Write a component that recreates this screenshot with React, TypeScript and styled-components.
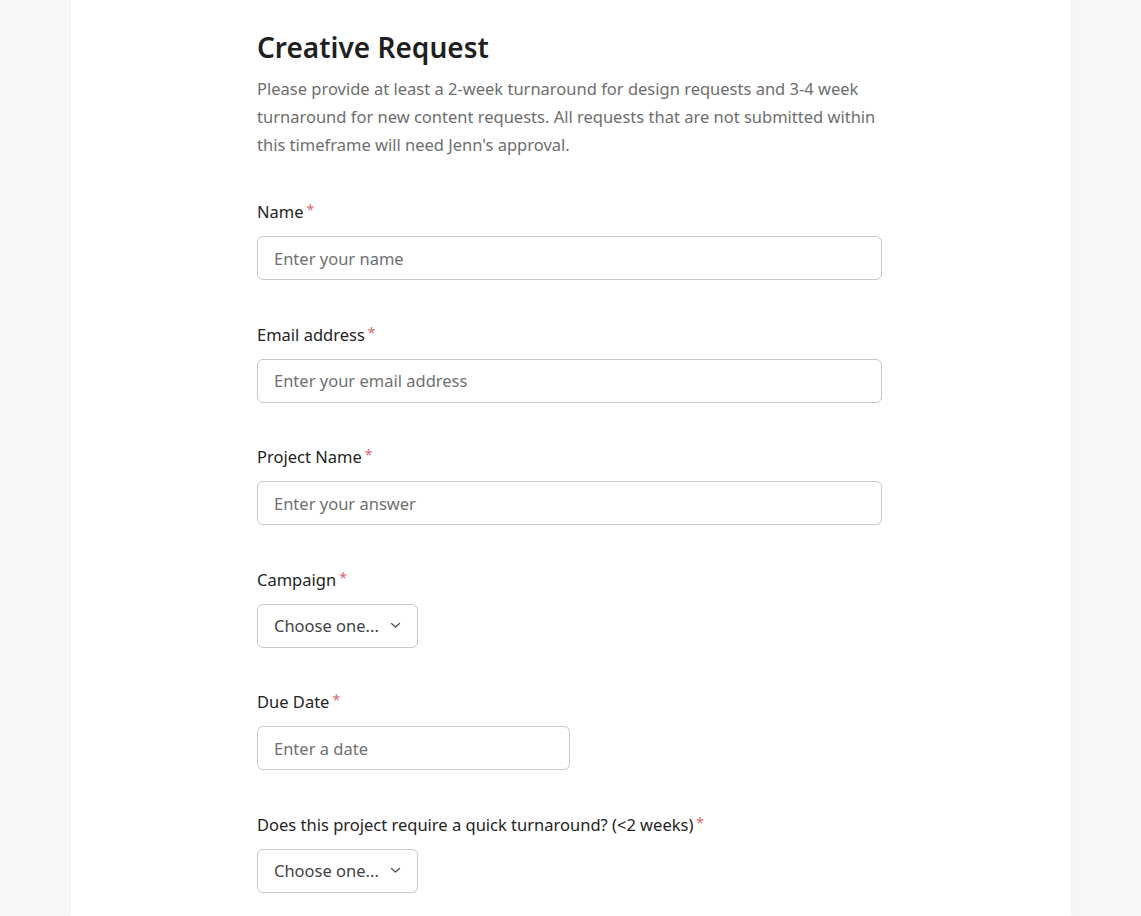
import React from "react";
import styled, { createGlobalStyle } from "styled-components";

const Global = createGlobalStyle`
  html, body { margin: 0; padding: 0; background: #f7f7f7; }
  body { font-family: "Noto Sans", "Open Sans", sans-serif; }
  * { box-sizing: border-box; }
`;

const Page = styled.div`
  min-height: 916px;
  background: #f7f7f7;
  display: flex;
  justify-content: center;
`;

const Card = styled.main`
  width: 1000px;
  min-height: 916px;
  background: #ffffff;
  box-shadow: 0 0 2px rgba(0, 0, 0, 0.06);
  display: flex;
  justify-content: flex-start;
  padding-left: 186.5px;
`;

const Form = styled.form`
  width: 625px;
  padding-top: 28px;
  display: flex;
  flex-direction: column;
`;

const Title = styled.h1`
  margin: 0;
  font-size: 28px;
  line-height: 38px;
  font-weight: 600;
  color: #1f1f1f;
`;

const Description = styled.p`
  margin: 9px 0 0;
  font-size: 16.5px;
  line-height: 28px;
  color: #6e6e6e;
`;

const Fields = styled.div`
  margin-top: 39px;
  display: flex;
  flex-direction: column;
  gap: 40.5px;
`;

const Field = styled.div`
  display: flex;
  flex-direction: column;
  gap: 12px;
`;

const Label = styled.label`
  font-size: 16.5px;
  line-height: 24px;
  color: #242424;
`;

const Star = styled.span`
  color: #d13438;
  font-size: 14px;
  margin-left: 3px;
  vertical-align: 3px;
  opacity: 0.75;
`;

const Input = styled.input<{ $w?: number }>`
  width: ${(p) => (p.$w ? `${p.$w}px` : "100%")};
  height: 44px;
  border: 1px solid #c8c8c8;
  border-radius: 6px;
  padding: 0 16px;
  font-family: inherit;
  font-size: 16.5px;
  color: #242424;
  background: #fff;
  outline: none;
  &::placeholder { color: #707070; }
`;

const Select = styled.button`
  width: 161px;
  height: 44px;
  border: 1px solid #c8c8c8;
  border-radius: 6px;
  padding: 0 16px;
  display: flex;
  align-items: center;
  justify-content: space-between;
  background: #fff;
  font-family: inherit;
  font-size: 16.5px;
  color: #444444;
  cursor: pointer;
`;

const Chevron = () => (
  <svg width="11" height="7" viewBox="0 0 11 7" fill="none">
    <path d="M1.5 1.5 L5.5 5 L9.5 1.5" stroke="#555" strokeWidth="1.4" strokeLinecap="round" strokeLinejoin="round" />
  </svg>
);

const Req = () => <Star>*</Star>;

export default function App() {
  return (
    <>
      <Global />
      <Page>
        <Card>
          <Form onSubmit={(e) => e.preventDefault()}>
            <Title>Creative Request</Title>
            <Description>
              Please provide at least a 2-week turnaround for design requests and 3-4 week
              turnaround for new content requests. All requests that are not submitted within
              this timeframe will need Jenn's approval.
            </Description>
            <Fields>
              <Field>
                <Label>Name<Req /></Label>
                <Input placeholder="Enter your name" />
              </Field>
              <Field>
                <Label>Email address<Req /></Label>
                <Input placeholder="Enter your email address" />
              </Field>
              <Field>
                <Label>Project Name<Req /></Label>
                <Input placeholder="Enter your answer" />
              </Field>
              <Field>
                <Label>Campaign<Req /></Label>
                <Select type="button">Choose one... <Chevron /></Select>
              </Field>
              <Field>
                <Label>Due Date<Req /></Label>
                <Input $w={313} placeholder="Enter a date" />
              </Field>
              <Field>
                <Label>Does this project require a quick turnaround? (&lt;2 weeks)<Req /></Label>
                <Select type="button">Choose one... <Chevron /></Select>
              </Field>
            </Fields>
          </Form>
        </Card>
      </Page>
    </>
  );
}
